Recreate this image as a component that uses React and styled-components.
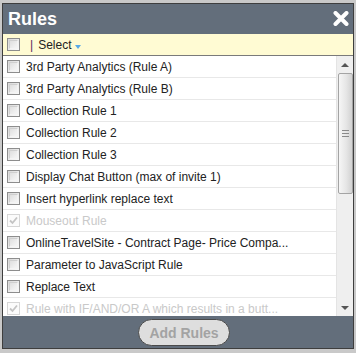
import React from "react";
import styled, { createGlobalStyle } from "styled-components";

const Global = createGlobalStyle`
  html, body { margin: 0; padding: 0; }
  body {
    background: #c9c9c9;
    font-family: "Liberation Sans", Arial, sans-serif;
    width: 356px;
    height: 353px;
    overflow: hidden;
  }
`;

const Page = styled.div`
  padding: 3px 0 0 2px;
`;

const Dialog = styled.div`
  width: 350px;
  height: 344px;
  border: 1px solid #3e3e3e;
  background: #636e7b;
  display: flex;
  flex-direction: column;
`;

const Header = styled.div`
  height: 30px;
  display: flex;
  align-items: center;
  justify-content: space-between;
  padding: 0 4px 0 5px;
  box-sizing: border-box;
`;

const Title = styled.h1`
  margin: 0;
  font-size: 18px;
  font-weight: bold;
  color: #fff;
  line-height: 30px;
`;

const Close = styled.button`
  border: 0;
  background: none;
  padding: 0;
  width: 17px;
  height: 16px;
  display: flex;
  align-items: center;
  justify-content: center;
  margin-top: -2px;
`;

const SelectBar = styled.div`
  height: 21px;
  background: #fffbd3;
  border-bottom: 1px solid #7a7a7a;
  display: flex;
  align-items: center;
  padding-left: 4px;
  font-size: 12px;
  color: #222;
`;

const Pipe = styled.span`
  color: #5b2960;
  margin-left: 10px;
`;

const SelectLabel = styled.span`
  margin-left: 5px;
`;

const Caret = styled.span`
  display: inline-block;
  width: 0;
  height: 0;
  border-left: 3px solid transparent;
  border-right: 3px solid transparent;
  border-top: 4px solid #58a9e6;
  margin-left: 4px;
  margin-top: 4px;
`;

const ListArea = styled.div`
  height: 260px;
  background: #fff;
  display: flex;
`;

const Rows = styled.div`
  flex: 1;
  overflow: hidden;
`;

const Row = styled.div`
  height: 21px;
  border-bottom: 1px solid #e8e8e8;
  display: flex;
  align-items: center;
  padding-left: 4px;
  font-size: 12px;
  color: ${(p) => (p.$disabled ? "#c9c9c9" : "#222")};
  white-space: nowrap;
`;

const RowText = styled.span`
  margin-left: 6px;
`;

const Box = styled.span`
  width: 13px;
  height: 13px;
  box-sizing: border-box;
  border: 1px solid ${(p) => (p.$disabled ? "#d6d6d6" : "#8d8d8d")};
  background: ${(p) =>
    p.$disabled
      ? "#fbfbfb"
      : "linear-gradient(135deg, #d8d8d8 0%, #eeeeee 60%, #fafafa 100%)"};
  display: inline-flex;
  align-items: center;
  justify-content: center;
  flex: none;
  position: relative;
  &::after {
    content: "";
    position: absolute;
    inset: 1px;
    border: 1px solid ${(p) => (p.$disabled ? "transparent" : "#f4f4f4")};
    border-top-color: ${(p) => (p.$disabled ? "transparent" : "#cfcfcf")};
    border-left-color: ${(p) => (p.$disabled ? "transparent" : "#cfcfcf")};
  }
`;

const Scrollbar = styled.div`
  width: 17px;
  background: #efefef;
  border-left: 1px solid #e4e4e4;
  box-sizing: border-box;
  display: flex;
  flex-direction: column;
  align-items: center;
`;

const Arrow = styled.div`
  height: 17px;
  width: 100%;
  display: flex;
  align-items: center;
  justify-content: center;
  flex: none;
`;

const Tri = styled.span`
  width: 0;
  height: 0;
  border-left: 4px solid transparent;
  border-right: 4px solid transparent;
  ${(p) =>
    p.$up
      ? "border-bottom: 4px solid #555;"
      : "border-top: 4px solid #555;"}
`;

const Track = styled.div`
  flex: 1;
  width: 100%;
  display: flex;
  flex-direction: column;
  align-items: center;
`;

const Thumb = styled.div`
  width: 15px;
  height: 121px;
  box-sizing: border-box;
  border: 1px solid #a4a4a4;
  border-radius: 2px;
  background: linear-gradient(90deg, #f6f6f6 0%, #e6e6e6 55%, #d2d2d2 100%);
  display: flex;
  flex-direction: column;
  align-items: center;
  justify-content: center;
  gap: 2px;
`;

const Grip = styled.span`
  width: 7px;
  height: 1px;
  background: #8a8a8a;
`;

const Footer = styled.div`
  height: 32px;
  display: flex;
  justify-content: center;
  align-items: flex-start;
  padding: 3px 0 0 12px;
  box-sizing: border-box;
`;

const AddButton = styled.button`
  width: 92px;
  height: 27px;
  border-radius: 14px;
  border: 1px solid #4a4a4a;
  background: #dedede;
  color: #a3a3a3;
  font-family: "Liberation Sans", Arial, sans-serif;
  font-weight: bold;
  font-size: 14px;
  padding: 0;
`;

const Check = ({ checked, disabled }) => (
  <Box $disabled={disabled}>
    {checked && (
      <svg width="9" height="9" viewBox="0 0 9 9" style={{ position: "relative", zIndex: 1 }}>
        <path d="M1 4.5 L3.5 7 L8 1.5" stroke="#c4c4c4" strokeWidth="1.8" fill="none" />
      </svg>
    )}
  </Box>
);

const rules = [
  { t: "3rd Party Analytics (Rule A)" },
  { t: "3rd Party Analytics (Rule B)" },
  { t: "Collection Rule 1" },
  { t: "Collection Rule 2" },
  { t: "Collection Rule 3" },
  { t: "Display Chat Button (max of invite 1)" },
  { t: "Insert hyperlink replace text" },
  { t: "Mouseout Rule", d: true },
  { t: "OnlineTravelSite - Contract Page- Price Compa..." },
  { t: "Parameter to JavaScript Rule" },
  { t: "Replace Text" },
  { t: "Rule with IF/AND/OR A which results in a butt...", d: true },
];

export default function App() {
  return (
    <Page>
      <Global />
      <Dialog>
        <Header>
          <Title>Rules</Title>
          <Close aria-label="close">
            <svg width="16" height="15" viewBox="0 0 16 15">
              <path d="M2.5 2 L13.5 13 M13.5 2 L2.5 13" stroke="#fff" strokeWidth="4" strokeLinecap="round" />
            </svg>
          </Close>
        </Header>
        <SelectBar>
          <Check />
          <Pipe>|</Pipe>
          <SelectLabel>Select</SelectLabel>
          <Caret />
        </SelectBar>
        <ListArea>
          <Rows>
            {rules.map((r) => (
              <Row key={r.t} $disabled={r.d}>
                <Check checked={r.d} disabled={r.d} />
                <RowText>{r.t}</RowText>
              </Row>
            ))}
          </Rows>
          <Scrollbar>
            <Arrow>
              <Tri $up />
            </Arrow>
            <Track>
              <Thumb>
                <Grip />
                <Grip />
                <Grip />
              </Thumb>
            </Track>
            <Arrow>
              <Tri />
            </Arrow>
          </Scrollbar>
        </ListArea>
        <Footer>
          <AddButton>Add Rules</AddButton>
        </Footer>
      </Dialog>
    </Page>
  );
}
